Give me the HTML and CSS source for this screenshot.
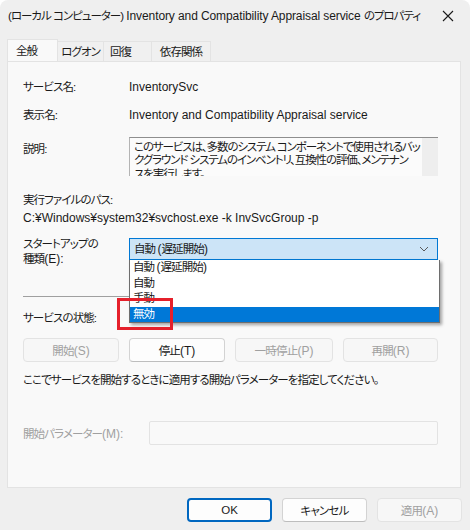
FILE: index.html
```html
<!DOCTYPE html>
<html lang="ja">
<head>
<meta charset="utf-8">
<title>プロパティ</title>
<link rel="stylesheet" href="styles.css">
</head>
<body>
<div class="window">
  <div class="titlebar">
    <span class="title"><span class="j">(ローカル コンピューター)</span> Inventory and Compatibility Appraisal service <span class="j">のプロパティ</span></span>
    <svg class="close" width="12" height="12" viewBox="0 0 12 12"><path d="M1 1L11 11M11 1L1 11" stroke="#1a1a1a" stroke-width="1.1" fill="none"/></svg>
  </div>

  <div class="tabs j">
    <div class="tab active">全般</div>
    <div class="tab t2">ログオン</div>
    <div class="tab t3">回復</div>
    <div class="tab t4">依存関係</div>
  </div>

  <div class="panel">
    <div class="row r1"><span class="lbl j">サービス名:</span><span class="lat">InventorySvc</span></div>
    <div class="row r2"><span class="lbl j">表示名:</span><span class="lat">Inventory and Compatibility Appraisal service</span></div>
    <div class="row r3">
      <span class="lbl j">説明:</span>
      <div class="desc">
        <div class="desc-text j">このサービスは、多数のシステム コンポーネントで使用されるバッ<br>クグラウンド システムのインベントリ、互換性の評価、メンテナン<br>スを実行します。</div>
        <div class="desc-scroll"></div>
      </div>
    </div>
    <div class="pathlbl j">実行ファイルのパス:</div>
    <div class="path lat">C:¥Windows¥system32¥svchost.exe -k InvSvcGroup -p</div>

    <div class="row r6">
      <span class="lbl two j">スタートアップの<br>種類<span class="l">(E):</span></span>
      <div class="combo-wrap j">
        <div class="combo">
          <span>自動 <span class="l">(</span>遅延開始<span class="l">)</span></span>
          <svg width="10" height="6" viewBox="0 0 10 6"><path d="M1 1L5 5L9 1" stroke="#5a5a5a" stroke-width="1" fill="none"/></svg>
        </div>
        <ul class="droplist">
          <li>自動 <span class="l">(</span>遅延開始<span class="l">)</span></li>
          <li>自動</li>
          <li>手動</li>
          <li class="sel">無効</li>
        </ul>
      </div>
    </div>

    <hr class="sep">

    <div class="row r7 j"><span class="lbl">サービスの状態:</span><span>実行中</span></div>

    <div class="svcbtns">
      <button class="btn off">開始<span class="l">(S)</span></button>
      <button class="btn">停止<span class="l">(T)</span></button>
      <button class="btn off">一時停止<span class="l">(P)</span></button>
      <button class="btn off">再開<span class="l">(R)</span></button>
    </div>

    <div class="hint j">ここでサービスを開始するときに適用する開始パラメーターを指定してください。</div>

    <div class="param">
      <span class="plbl j">開始パラメーター<span class="l">(M):</span></span>
      <div class="pinput"></div>
    </div>

    <div class="mark"></div>
  </div>

  <div class="footer">
    <button class="btn fbtn ok">OK</button>
    <button class="btn fbtn">キャンセル</button>
    <button class="btn fbtn off">適用<span class="l">(A)</span></button>
  </div>
</div>
</body>
</html>
```

FILE: styles.css
```css
html, body {
  margin: 0;
  padding: 0;
  background: #ffffff;
}
body {
  font-family: "Liberation Sans", "Noto Sans CJK JP", sans-serif;
  font-size: 12px;
  font-feature-settings: "palt";
  color: #1a1a1a;
}
/* mostly japanese text: narrow it toward the UI font */
.j {
  font-size: 11.5px;
  letter-spacing: -0.9px;
}
.l {
  letter-spacing: 0;
  font-size: 12px;
}
.lat {
  letter-spacing: 0;
}
.window {
  width: 470px;
  height: 530px;
  background: #efefef;
  border-radius: 8px 8px 0 0;
  position: relative;
  overflow: hidden;
}
.titlebar {
  height: 30px;
  display: flex;
  align-items: center;
  padding-left: 8px;
  padding-right: 16px;
  justify-content: space-between;
}
.title {
  white-space: nowrap;
  letter-spacing: -0.1px;
}
.title .j {
  letter-spacing: -1px;
}
.close {
  margin-top: 1px;
}

/* tabs */
.tabs {
  display: flex;
  padding-left: 7px;
  margin-top: 9px;
  height: 22px;
  align-items: flex-end;
}
.tab {
  height: 20px;
  line-height: 20px;
  background: #f0f0f0;
  border: 1px solid #e3e3e3;
  border-bottom: none;
  text-align: center;
  box-sizing: border-box;
}
.tab.active {
  height: 23px;
  width: 51px;
  background: #f9f9f9;
  line-height: 22px;
  text-align: left;
  padding-left: 8px;
  margin-bottom: -1px;
  position: relative;
}
.t2 { width: 46px; border-left: none; }
.t3 { width: 48px; border-left: none; padding-right: 14px; }
.t4 { width: 59px; border-left: none; }

.panel {
  margin-left: 7px;
  width: 454px;
  height: 427px;
  box-sizing: border-box;
  background: #f9f9f9;
  border: 1px solid #e3e3e3;
  padding: 17px 22px 0 15px;
  position: relative;
}
.row {
  display: flex;
  line-height: 16px;
}
.lbl {
  width: 106px;
  flex: none;
}
.r2 { margin-top: 12px; }
.r3 { margin-top: 14px; }
.r3 .lbl { margin-top: 4px; }

.desc {
  width: 311px;
  height: 38px;
  margin-bottom: 2px;
  background: #fbfbfb;
  border-top: 1px solid #8e8e8e;
  border-left: 1px solid #b4b4b4;
  display: flex;
  overflow: hidden;
}
.desc-text {
  flex: 1;
  padding: 3px 0 0 4px;
  line-height: 13.4px;
  letter-spacing: -1.1px;
  white-space: nowrap;
  overflow: hidden;
}
.desc-scroll {
  width: 16px;
  flex: none;
  background: #eeeeee;
}
.pathlbl {
  margin-top: 14px;
  line-height: 16px;
}
.path {
  margin-top: 2px;
  line-height: 16px;
}

.r6 { margin-top: 12px; }
.lbl.two {
  line-height: 15px;
  margin-top: -1px;
}
.combo-wrap {
  position: relative;
  width: 311px;
}
.combo {
  height: 22px;
  box-sizing: border-box;
  background: #cce4f7;
  border: 1px solid #0078d4;
  display: flex;
  align-items: center;
  justify-content: space-between;
  padding: 0 8px 0 4px;
}
.droplist {
  position: absolute;
  left: 0;
  top: 22px;
  width: 311px;
  box-sizing: border-box;
  margin: 0;
  padding: 0;
  list-style: none;
  background: #ffffff;
  border: 1px solid #6e6e6e;
  border-top: none;
  box-shadow: 2px 2px 3px rgba(0, 0, 0, 0.35);
  z-index: 2;
}
.droplist li {
  height: 15.5px;
  line-height: 15.5px;
  padding-left: 3px;
}
.droplist li.sel {
  background: #0078d7;
  color: #ffffff;
}

.sep {
  border: none;
  border-top: 1px solid #a0a0a0;
  margin: 29px 0 0 0;
  height: 0;
}
.r7 { margin-top: 13px; }

.svcbtns {
  display: flex;
  gap: 10px;
  margin-top: 12px;
}
.btn {
  font-family: inherit;
  font-size: 11.5px;
  letter-spacing: -0.8px;
  font-feature-settings: "palt";
  color: #1a1a1a;
  height: 24px;
  width: 96px;
  background: #fdfdfd;
  border: 1px solid #d3d3d3;
  border-bottom-color: #bdbdbd;
  border-radius: 4px;
  padding: 0;
}
.btn.off {
  background: #f7f7f7;
  border-color: #e3e3e3;
  color: #a0a0a0;
}
.svcbtns .btn:nth-child(3) { width: 98px; }
.svcbtns .btn:nth-child(4) { width: 95px; }

.hint {
  margin-top: 10px;
  line-height: 16px;
}
.param {
  display: flex;
  align-items: center;
  margin-top: 33px;
}
.plbl {
  width: 126px;
  flex: none;
  color: #a0a0a0;
}
.pinput {
  width: 291px;
  height: 24px;
  box-sizing: border-box;
  background: #f9f9f9;
  border: 1px solid #e3e3e3;
  border-radius: 2px;
}

.mark {
  position: absolute;
  left: 109px;
  top: 236px;
  width: 56px;
  height: 32px;
  box-sizing: border-box;
  border: 3px solid #e5202b;
  z-index: 3;
}

.footer {
  display: flex;
  justify-content: flex-end;
  gap: 10px;
  padding-right: 8px;
  margin-top: 10px;
}
.fbtn {
  width: 85px;
}
.fbtn.ok {
  border: 2px solid #0067c0;
  border-radius: 4px;
  letter-spacing: 0;
}
```
